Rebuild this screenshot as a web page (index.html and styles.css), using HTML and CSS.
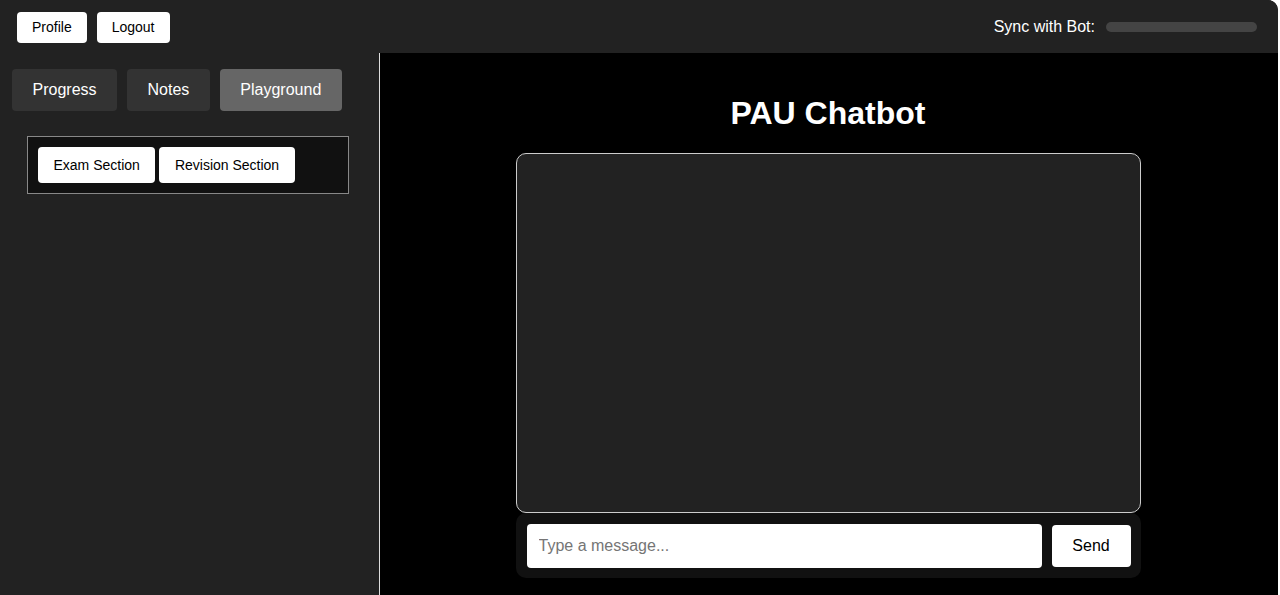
FILE: index.html
```html
<!DOCTYPE html>
<html lang="en">
<head>
<meta charset="utf-8">
<title>PAU Chatbot</title>
<link rel="stylesheet" href="styles.css">
</head>
<body>
<div class="app">
  <header class="topbar">
    <div class="top-left">
      <button class="top-btn">Profile</button>
      <button class="top-btn">Logout</button>
    </div>
    <div class="sync">
      <span class="sync-label">Sync with Bot:</span>
      <div class="sync-bar"></div>
    </div>
  </header>
  <div class="body">
    <aside class="sidebar">
      <nav class="tabs">
        <button class="tab">Progress</button>
        <button class="tab">Notes</button>
        <button class="tab active">Playground</button>
      </nav>
      <div class="section-box">
        <button class="section-btn">Exam Section</button>
        <button class="section-btn">Revision Section</button>
      </div>
    </aside>
    <main class="main">
      <h1 class="title">PAU Chatbot</h1>
      <div class="chat">
        <div class="messages"></div>
        <div class="composer">
          <input class="msg-input" type="text" placeholder="Type a message...">
          <button class="send-btn">Send</button>
        </div>
      </div>
    </main>
  </div>
</div>
</body>
</html>
```

FILE: styles.css
```css
* { box-sizing: border-box; }
html, body { margin: 0; padding: 0; background: #fff; }
body { font-family: "Liberation Sans", Arial, sans-serif; }
button { font-family: inherit; cursor: pointer; }

.app {
  width: 1278px;
  height: 595px;
  background: #222;
  border-top-right-radius: 10px;
  display: flex;
  flex-direction: column;
  overflow: hidden;
}

.topbar {
  height: 53px;
  flex: none;
  display: flex;
  align-items: center;
  justify-content: space-between;
  padding: 1px 21px 0 17px;
  background: #222;
}
.top-left { display: flex; gap: 10px; }
.top-btn {
  background: #fff;
  color: #000;
  border: none;
  border-radius: 4px;
  font-size: 14px;
  line-height: 17px;
  padding: 7px 15px;
}
.sync { display: flex; align-items: center; }
.sync-label { color: #fff; font-size: 16px; }
.sync-bar {
  width: 151px;
  height: 10px;
  margin-left: 11px;
  border-radius: 5px;
  background: #444;
}

.body { flex: 1; display: flex; min-height: 0; }

.sidebar {
  width: 380px;
  flex: none;
  background: #222;
  border-right: 1px solid #ddd;
  padding: 16px 12px 0 12px;
}
.tabs { display: flex; gap: 10px; }
.tab {
  background: #333;
  color: #fff;
  border: none;
  border-radius: 4px;
  font-size: 16px;
  line-height: 18px;
  padding: 12px 20.5px;
}
.tab.active { background: #666; }

.section-box {
  margin: 25px 0 0 15px;
  width: 322px;
  height: 58px;
  background: #111;
  border: 1px solid #888;
  padding: 10px;
  display: flex;
  gap: 4px;
}
.section-btn {
  background: #fff;
  color: #000;
  border: none;
  border-radius: 4px;
  font-size: 14px;
  line-height: 16px;
  padding: 10px 15.5px;
}

.main {
  flex: 1;
  background: #000;
  padding: 20px 22px 20px 20px;
  display: flex;
  flex-direction: column;
  align-items: center;
}
.title {
  color: #fff;
  font-size: 32px;
  font-weight: bold;
  margin: 21.5px 0;
  line-height: 37px;
}
.chat { width: 625px; display: flex; flex-direction: column; }
.messages {
  height: 360px;
  background: #222;
  border: 1px solid #ccc;
  border-radius: 10px;
}
.composer {
  background: #111;
  border-radius: 10px;
  padding: 11px 10px 10px 11px;
  display: flex;
  align-items: center;
  gap: 10px;
}
.msg-input {
  flex: 1;
  height: 44px;
  border: none;
  border-radius: 4px;
  padding: 0 12px;
  font-family: inherit;
  font-size: 16px;
  background: #fff;
  color: #000;
  outline: none;
}
.msg-input::placeholder { color: #757575; }
.send-btn {
  width: 79px;
  height: 42px;
  background: #fff;
  color: #000;
  border: none;
  border-radius: 4px;
  font-size: 16px;
}
```
